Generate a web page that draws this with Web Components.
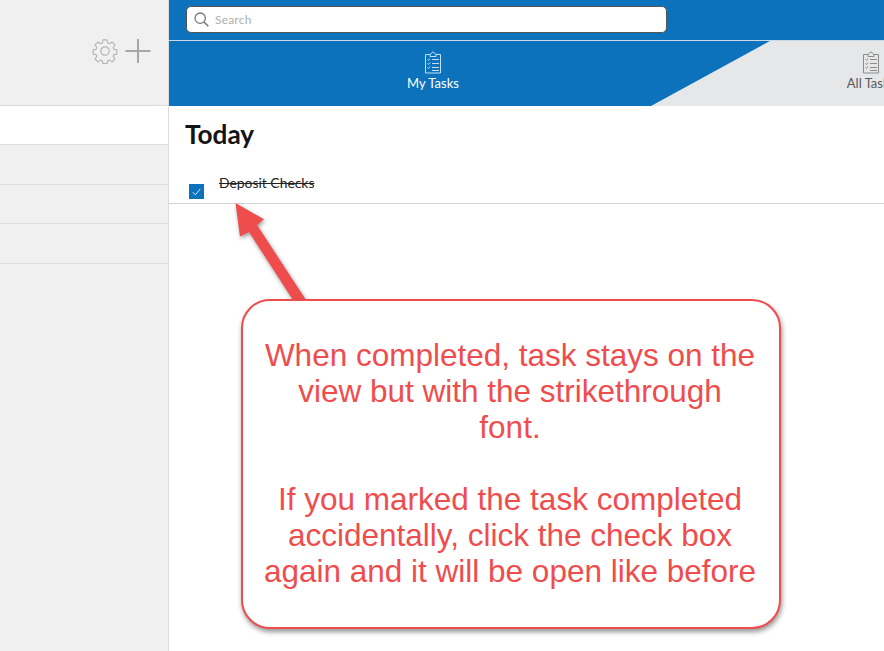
<!DOCTYPE html>
<html>
<head>
<meta charset="utf-8">
<title>Tasks</title>
<style>
  html, body { margin: 0; height: 100%; background: #fff; overflow: hidden; }
  body { font-family: Lato, "Liberation Sans", sans-serif; }
  .app { display: flex; width: 884px; height: 651px; overflow: hidden; position: relative; }
</style>
</head>
<body>
<div class="app">
  <side-nav></side-nav>
  <main-pane>
    <search-bar></search-bar>
    <tab-strip>
      <task-tab active>My Tasks</task-tab>
      <task-tab>All Tasks</task-tab>
    </tab-strip>
    <task-section heading="Today">
      <task-item done>Deposit Checks</task-item>
    </task-section>
  </main-pane>
  <callout-note>
    When completed, task stays on the view but with the strikethrough<br>font.<br><br>If you marked the task completed accidentally, click the check box again and it will be open like before
  </callout-note>
</div>

<script>
class SideNav extends HTMLElement {
  constructor() {
    super();
    this.attachShadow({ mode: "open" });
    this.shadowRoot.innerHTML = `
      <style>
        :host {
          display: block;
          flex: 0 0 168px;
          height: 651px;
          background: #f0f0f0;
          border-right: 1px solid #dcdcdc;
        }
        .top {
          height: 67px;
          display: flex;
          justify-content: flex-end;
          align-items: flex-start;
          gap: 7px;
          padding: 38px 17px 0 0;
          border-bottom: 1px solid #dcdcdc;
        }
        .row { border-bottom: 1px solid #dcdcdc; }
        .row.on { background: #fff; }
        svg { display: block; }
      </style>
      <div class="top">
        <svg width="26" height="26" viewBox="0 0 26 26" fill="none" stroke="#b4b4b4" stroke-width="1.2" stroke-linejoin="round">
          <path d="M10.8 1.2h4.4l.6 3.3 1.9.8 2.8-1.9 3.1 3.1-1.9 2.8.8 1.9 3.1.6v4.4l-3.1.6-.8 1.9 1.9 2.8-3.1 3.1-2.8-1.9-1.9.8-.6 2.9h-4.4l-.6-2.9-1.9-.8-2.8 1.9-3.1-3.1 1.9-2.8-.8-1.9-3.1-.6v-4.4l3.1-.6.8-1.9-1.9-2.8 3.1-3.1 2.8 1.9 1.9-.8z" transform="translate(13 13) scale(.94) translate(-13 -13)"/>
          <circle cx="13" cy="13" r="4.2"/>
        </svg>
        <svg width="26" height="26" viewBox="0 0 26 26" stroke="#a6a6a6" stroke-width="2">
          <path d="M13 1v24M0.500 13h25"/>
        </svg>
      </div>
      <div class="row on" style="height:38px"></div>
      <div class="row" style="height:39px"></div>
      <div class="row" style="height:38px"></div>
      <div class="row" style="height:39px"></div>
    `;
  }
}

class MainPane extends HTMLElement {
  constructor() {
    super();
    this.attachShadow({ mode: "open" });
    this.shadowRoot.innerHTML = `
      <style>
        :host {
          display: flex;
          flex-direction: column;
          flex: 1;
          min-width: 0;
          overflow: hidden;
        }
      </style>
      <slot></slot>
    `;
  }
}

class SearchBar extends HTMLElement {
  constructor() {
    super();
    this.attachShadow({ mode: "open" });
    this.shadowRoot.innerHTML = `
      <style>
        :host {
          display: block;
          height: 40px;
          box-sizing: border-box;
          padding: 6px 0 0 17px;
          background: #0c72bc;
        }
        .box {
          width: 481px;
          height: 27px;
          box-sizing: border-box;
          display: flex;
          align-items: center;
          gap: 6px;
          padding-left: 7px;
          background: #fff;
          border: 1px solid #555;
          border-radius: 5px;
          color: #aeb0b3;
          font: 12px Lato, "Liberation Sans", sans-serif;
          letter-spacing: .2px;
        }
        svg { display: block; }
      </style>
      <div class="box">
        <svg width="15" height="15" viewBox="0 0 15 15" fill="none" stroke="#777" stroke-width="1.3">
          <circle cx="6.2" cy="6.200" r="5.200"/>
          <path d="M10 10l4.300 4.300" stroke-width="1.600"/>
        </svg>
        <span>Search</span>
      </div>
    `;
  }
}

class TabStrip extends HTMLElement {
  constructor() {
    super();
    this.attachShadow({ mode: "open" });
    this.shadowRoot.innerHTML = `
      <style>
        :host {
          display: flex;
          position: relative;
          height: 66px;
          box-sizing: border-box;
          background: #0c72bc;
          border-top: 1px solid #c9d9e6;
          overflow: hidden;
        }
        .wedge {
          position: absolute;
          inset: 0;
          background: #e6e7e9;
          clip-path: polygon(601px 0, 715px 0, 715px 65px, 482px 65px);
        }
      </style>
      <div class="wedge"></div>
      <slot></slot>
    `;
  }
}

class TaskTab extends HTMLElement {
  constructor() {
    super();
    this.attachShadow({ mode: "open" });
    const on = this.hasAttribute("active");
    const line = on ? "#bfe0f5" : "#8c8c8c";
    this.shadowRoot.innerHTML = `
      <style>
        :host {
          display: flex;
          flex-direction: column;
          align-items: center;
          position: relative;
          flex: 0 0 528px;
          padding-top: 10px;
          font: 13px/19px Lato, "Liberation Sans", sans-serif;
          color: ${on ? "#fff" : "#58595b"};
          white-space: nowrap;
        }
        :host(:not([active])) { flex: 0 0 348px; }
        svg { display: block; }
      </style>
      <svg width="18" height="23" viewBox="0 0 18 23" fill="none" stroke="${line}" stroke-width="1">
        <path d="M6 3.500H1.500v18.500h15V3.500H12M6 5.500V3.500L9 .8l3 2.700v2z"/>
        <path d="M3.500 8.500l1 1 1.500-2M3.500 12.500l1 1 1.500-2M3.500 16.500l1 1 1.500-2"/>
        <path d="M8 8.500h7M8 12.500h7M8 16.500h7M8 19.500h7"/>
      </svg>
      <slot></slot>
    `;
  }
}

class TaskSection extends HTMLElement {
  constructor() {
    super();
    this.attachShadow({ mode: "open" });
    this.shadowRoot.innerHTML = `
      <style>
        :host { display: block; }
        h2 {
          margin: 0;
          padding: 13px 0 0 16px;
          height: 60px;
          box-sizing: border-box;
          font: 700 26.200px/31px Lato, "Liberation Sans", sans-serif;
          color: #141414;
        }
      </style>
      <h2>${this.getAttribute("heading") || ""}</h2>
      <slot></slot>
    `;
  }
}

class TaskItem extends HTMLElement {
  constructor() {
    super();
    this.attachShadow({ mode: "open" });
    this.shadowRoot.innerHTML = `
      <style>
        :host {
          display: flex;
          align-items: flex-start;
          height: 38px;
          box-sizing: border-box;
          border-bottom: 1px solid #d4d4d4;
          padding-left: 20px;
          font: 13.900px/16px Lato, "Liberation Sans", sans-serif;
          color: #222;
        }
        .check {
          flex: none;
          width: 15px;
          height: 15px;
          margin-top: 18px;
          background: #0c72bc;
          display: flex;
          align-items: center;
          justify-content: center;
        }
        .label { margin: 9px 0 0 15px; }
        :host([done]) .label { text-decoration: line-through; }
        svg { display: block; }
      </style>
      <span class="check">
        <svg width="9" height="8" viewBox="0 0 9 8" fill="none" stroke="#dcecf8" stroke-width="1"><path d="M.8 4.300l2.500 2.500L8.200 1"/></svg>
      </span>
      <span class="label"><slot></slot></span>
    `;
  }
}

class CalloutNote extends HTMLElement {
  constructor() {
    super();
    this.attachShadow({ mode: "open" });
    this.shadowRoot.innerHTML = `
      <style>
        :host {
          display: block;
          position: absolute;
          left: 0;
          top: 0;
          width: 884px;
          height: 651px;
          pointer-events: none;
        }
        svg {
          position: absolute;
          left: 0;
          top: 0;
          filter: drop-shadow(1px 2px 2px rgba(0,0,0,.4));
        }
        .bubble {
          position: absolute;
          left: 241px;
          top: 299px;
          width: 540px;
          height: 330px;
          box-sizing: border-box;
          padding: 36px 12px 0 10px;
          background: #fff;
          border: 2px solid #ef4d4d;
          border-radius: 29px;
          box-shadow: 1px 3px 5px rgba(0,0,0,.42);
          color: #ef4d4d;
          font: 31.500px/36px "Liberation Sans", Arial, sans-serif;
          text-align: center;
        }
      </style>
      <svg width="884" height="651" viewBox="0 0 884 651">
        <path fill="#ef4d4d" d="M235.500 203L264 219.300 257 225 306 300H293L249 232 240 236.500z"/>
      </svg>
      <div class="bubble"><slot></slot></div>
    `;
  }
}

customElements.define("side-nav", SideNav);
customElements.define("main-pane", MainPane);
customElements.define("search-bar", SearchBar);
customElements.define("tab-strip", TabStrip);
customElements.define("task-tab", TaskTab);
customElements.define("task-section", TaskSection);
customElements.define("task-item", TaskItem);
customElements.define("callout-note", CalloutNote);
</script>
</body>
</html>
